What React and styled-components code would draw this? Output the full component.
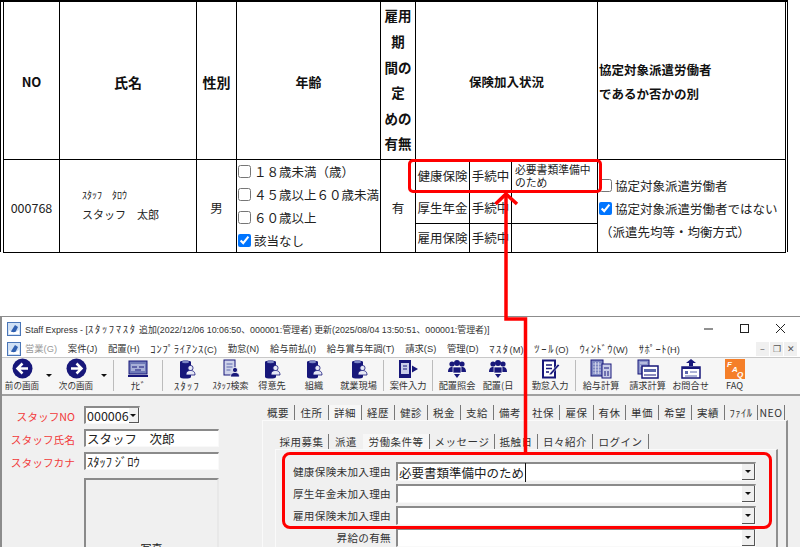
import React from 'react';
import styled, { createGlobalStyle } from 'styled-components';

const NAVY = '#17177a';
const SLATE = '#5c68ad';
const JP = `"Noto Sans CJK JP", "Noto Sans", sans-serif`;
const UI = `"Liberation Sans", "Noto Sans CJK JP", sans-serif`;

const GlobalStyle = createGlobalStyle`
  html, body {
    margin: 0;
    padding: 0;
    background: #fff;
    overflow: hidden;
  }
  * { box-sizing: border-box; }
`;

const Page = styled.div`
  position: relative;
  width: 800px;
  height: 547px;
  overflow: hidden;
  font-family: ${JP};
  color: #222;
`;

/* ---- contract table ---- */

const TableFrame = styled.div`
  width: 788px;
  height: 252px;
  border-top: 2px solid #000;
  border-left: 1px solid #000;
  border-right: 1px solid #000;
  padding: 0 2px;
`;

const Table = styled.table`
  table-layout: fixed;
  border-collapse: collapse;
  width: 782px;
  height: 250px;
  font-size: 12.5px;
`;

const Head = styled.th`
  border: 1px solid #000;
  border-top: 0;
  padding: ${p => p.$flat ? 0 : 4}px 0 0 ${p => p.$left ? 1 : 0}px;
  height: 157px;
  font-size: ${p => p.$size || 12.5}px;
  font-weight: 700;
  color: #111;
  text-align: ${p => p.$left ? 'left' : 'center'};
  line-height: ${p => p.$lh || 24}px;
`;

const Cell = styled.td`
  border: 1px solid #000;
  padding: ${p => p.$pad || 0};
  text-align: ${p => p.$center ? 'center' : 'left'};
  vertical-align: middle;
  white-space: nowrap;
`;

const NameKana = styled.div`
  font-size: 10px;
  line-height: 14px;
  padding-left: 22px;
  margin-bottom: 5px;
`;

const NameText = styled.div`
  font-size: 11px;
  line-height: 14px;
  padding-left: 22px;
  margin-bottom: 2px;
`;

const CheckLine = styled.label`
  display: flex;
  align-items: center;
  height: ${p => p.$h}px;
  padding-left: ${p => p.$indent}px;
`;

const Check = styled.input.attrs({ type: 'checkbox', readOnly: true })`
  margin: 0 3px 0 0;
  width: 13px;
  height: 13px;
`;

const InsuranceGrid = styled.div`
  display: grid;
  grid-template-columns: 54px 42px 1fr;
  grid-template-rows: 33px 31px 1fr;
  height: 92px;
`;

const InsuranceCell = styled.div`
  display: flex;
  align-items: center;
  justify-content: center;
  border-right: ${p => p.$last ? 0 : '1px solid #000'};
  border-bottom: ${p => p.$bottom ? '1px solid #000' : 0};
  font-size: ${p => p.$small ? 10.8 : 12.5}px;
  line-height: 13px;
  white-space: ${p => p.$small ? 'normal' : 'nowrap'};
  ${p => p.$small && 'padding: 0 3px 0 3px; justify-content: flex-start;'}
`;

const ReasonNote = styled.div`
  padding-left: 1px;
  height: 23px;
  line-height: 23px;
`;

/* ---- red annotations ---- */

const RedBox = styled.div`
  position: absolute;
  left: ${p => p.$x}px;
  top: ${p => p.$y}px;
  width: ${p => p.$w}px;
  height: ${p => p.$h}px;
  border: 3px solid #f00;
  border-radius: ${p => p.$r}px;
`;

const ArrowLayer = styled.svg`
  position: absolute;
  left: 0;
  top: 0;
  pointer-events: none;
`;

/* ---- application window ---- */

const Window = styled.div`
  margin-top: 64px;
  height: 231px;
  border-top: 1px solid #8c8c8c;
  border-left: 2px solid #8c8c8c;
  background: #f0f0f0;
  overflow: hidden;
`;

const TitleBar = styled.div`
  display: flex;
  align-items: center;
  height: 23px;
  background: #fff;
  padding-left: 5px;
  font-family: ${UI};
  font-size: 8.9px;
  color: #333;
  white-space: nowrap;
`;

const TitleText = styled.span`
  margin-left: 4px;
`;

const Kana = styled.span`
  font-size: ${p => p.$size || 10.5}px;
  letter-spacing: ${p => p.$sp ?? 1.7}px;
`;

const WinControls = styled.div`
  display: flex;
  align-items: center;
  gap: 25px;
  margin-left: auto;
  padding-right: 14px;
`;

const MenuBar = styled.div`
  display: flex;
  align-items: center;
  height: 17px;
  background: #fff;
  padding-left: 5px;
  border-bottom: 1px solid #c8c8c8;
  box-sizing: content-box;
  white-space: nowrap;
`;

const MenuList = styled.div`
  display: flex;
  gap: 10.8px;
  margin-left: 4px;
  font-family: ${UI};
`;

const MenuItem = styled.span`
  font-size: 9.3px;
  color: ${p => p.$off ? '#9a9a9a' : '#333'};
`;

const MdiButtons = styled.div`
  display: flex;
  gap: 1px;
  margin-left: auto;
  margin-right: 3px;
`;

const MdiButton = styled.span`
  display: flex;
  align-items: center;
  justify-content: center;
  width: 13px;
  height: 14px;
  background: #f0f0f0;
  font-size: 9px;
  color: #555;
`;

const Toolbar = styled.div`
  display: flex;
  height: 38px;
  padding-left: 1px;
  background: #f6f6f6;
  border-bottom: 2px solid #a0a0a0;
`;

const ToolItem = styled.div`
  display: flex;
  flex-direction: column;
  align-items: center;
  flex: 0 0 ${p => p.$w}px;
`;

const ToolIconBox = styled.div`
  height: 21px;
  display: flex;
  align-items: center;
`;

const ToolLabel = styled.span`
  font-size: ${p => p.$size || 9.2}px;
  line-height: 13px;
  white-space: nowrap;
  color: #333;
`;

const Caret = styled.div`
  flex: 0 0 ${p => p.$w}px;
  display: flex;
  justify-content: center;
  padding-top: 16px;
  &::before {
    content: '';
    border-left: 3px solid transparent;
    border-right: 3px solid transparent;
    border-top: 3px solid #111;
    height: 0;
  }
`;

const ToolSep = styled.div`
  flex: 0 0 1px;
  margin: 2px 0 3px;
  background: #bcbcbc;
`;

const Body = styled.div`
  display: flex;
  height: 135px;
`;

const LeftPane = styled.div`
  flex: 0 0 260px;
  padding-top: 10px;
  display: flex;
  flex-direction: column;
`;

const LeftRow = styled.div`
  display: flex;
  align-items: center;
  height: 18px;
  margin-bottom: ${p => p.$mb}px;
`;

const RedLabel = styled.span`
  width: 73px;
  margin-right: 9px;
  padding-top: 2px;
  text-align: right;
  font-size: 10.7px;
  color: #f23a3a;
  white-space: nowrap;
`;

const Field = styled.div`
  display: flex;
  align-items: center;
  width: ${p => p.$w}px;
  height: 100%;
  background: #fff;
  border-top: 2px solid #8a8a8a;
  border-left: 2px solid #8a8a8a;
  border-right: 1px solid #f9f9f9;
  border-bottom: 1px solid #f9f9f9;
  padding-left: 1px;
  font-size: 12.5px;
  white-space: nowrap;
`;

const DropButton = styled.span`
  display: flex;
  align-items: center;
  justify-content: center;
  width: 13px;
  height: 100%;
  margin-left: auto;
  background: #f0f0f0;
  border-right: 1px solid #555;
  border-bottom: 1px solid #555;
  &::before {
    content: '';
    border-left: 3px solid transparent;
    border-right: 3px solid transparent;
    border-top: 3px solid #111;
  }
`;

const PhotoBox = styled.div`
  margin-left: 82px;
  width: 135px;
  height: 90px;
  padding-top: 60px;
  background: #f0f0f0;
  border-top: 2px solid #8a8a8a;
  border-left: 2px solid #8a8a8a;
  border-right: 2px solid #e8e8e8;
  text-align: center;
  font-size: 11px;
`;

const RightPane = styled.div`
  flex: 1;
  padding-top: 9px;
`;

const TabRow = styled.div`
  display: flex;
  height: ${p => p.$h}px;
`;

const Tab = styled.span`
  flex: 0 0 ${p => p.$w}px;
  display: flex;
  align-items: center;
  justify-content: center;
  height: 15px;
  font-size: 10.5px;
  letter-spacing: 0.5px;
  white-space: nowrap;
  color: #333;
  background: ${p => p.$active ? '#f7f7f7' : 'transparent'};
  border-right: ${p => p.$plain ? 0 : '1px solid #777'};
`;

const OuterPanel = styled.div`
  width: 526px;
  height: 130px;
  border-top: 1px solid #fafafa;
  border-left: 1px solid #fafafa;
  border-right: 2px solid #8f8f8f;
  padding: 13px 0 0 12px;
`;

const InnerPanel = styled.div`
  width: 503px;
  height: 100px;
  border-top: 1px solid #fafafa;
  border-left: 1px solid #fafafa;
  border-right: 2px solid #8f8f8f;
  padding-top: 12px;
  display: flex;
  flex-direction: column;
  gap: 3px;
`;

const ReasonRow = styled.div`
  display: flex;
  align-items: center;
  height: 19px;
`;

const ReasonLabel = styled.span`
  width: 115px;
  margin-right: 5px;
  text-align: right;
  font-size: 10.6px;
  letter-spacing: 0.3px;
  white-space: nowrap;
  color: #333;
`;

const Caretted = styled.span`
  border-right: 1px solid #111;
  padding-right: 1px;
`;

/* ---- toolbar drawings ---- */

const Svg = ({ w = 20, h = 20, children }) => (
  <svg width={w} height={h} viewBox={`0 0 ${w} ${h}`}>{children}</svg>
);

const NavIcon = ({ back }) => (
  <Svg w={21} h={21}>
    <circle cx="10.500" cy="10.500" r="10" fill={NAVY} />
    <path
      d={back ? 'M16 10.500H6M10.500 5.500 5.500 10.500l5 5' : 'M5 10.500h10M10.500 5.500l5 5-5 5'}
      fill="none"
      stroke="#fff"
      strokeWidth="2.500"
    />
  </Svg>
);

const MonitorIcon = () => (
  <Svg w={22} h={20}>
    <rect x="2" y="2" width="18" height="13" fill="#6f7ab8" stroke={NAVY} />
    <rect x="4" y="5" width="14" height="7" fill="#a8b0d8" />
    <path d="M5 8h5M12 8h5M8 11h6" stroke={NAVY} />
    <rect x="1" y="16" width="20" height="2" fill={NAVY} />
  </Svg>
);

const Person = ({ x, y, fill = NAVY, line = '#fff' }) => (
  <>
    <circle cx={x} cy={y} r="2.600" fill={fill} stroke={line} strokeWidth="0.8" />
    <path d={`M${x - 4.5} ${y + 7}c0-3.500 2-4.500 4.500-4.500s4.500 1 4.500 4.500z`} fill={fill} stroke={line} strokeWidth="0.8" />
  </>
);

const FileIcon = () => (
  <Svg w={20} h={20}>
    <path d="M3 3c0-2 11-2 11 0v15c0 2-11 2-11 0z" fill={NAVY} />
    <ellipse cx="8.500" cy="3" rx="3.500" ry="1.200" fill="#7c86c4" />
    <Person x={13.5} y={9} fill="#e6e8f6" line={NAVY} />
  </Svg>
);

const DocPersonIcon = () => (
  <Svg w={20} h={20}>
    <rect x="3" y="1" width="11" height="15" fill="#cfd3ea" stroke={NAVY} />
    <path d="M5.500 5h6M5.500 8h6M5.500 11h4" stroke={SLATE} />
    <Person x={14} y={11} />
  </Svg>
);

const EntryIcon = () => (
  <Svg w={22} h={20}>
    <rect x="2" y="1" width="12" height="18" fill={NAVY} />
    <rect x="4" y="4" width="8" height="11" fill="#c9cde8" />
    <path d="M6 7h4M6 10h4" stroke={NAVY} />
    <path d="M15 6.500 21 10l-6 3.500z" fill={NAVY} />
  </Svg>
);

const GroupIcon = () => (
  <Svg w={20} h={20}>
    <circle cx="5" cy="5" r="2.600" fill={NAVY} />
    <circle cx="15" cy="5" r="2.600" fill={NAVY} />
    <circle cx="10" cy="4" r="3" fill={NAVY} />
    <path d="M1 13c0-4 2-5 4-5h10c2 0 4 1 4 5z" fill={NAVY} />
    <path d="M6 8h8v6H6z" fill={NAVY} stroke="#fff" strokeWidth="0.7" />
    <path d="M7 15h6l-3 4z" fill={NAVY} />
  </Svg>
);

const EditIcon = () => (
  <Svg w={20} h={20}>
    <rect x="3" y="1.500" width="12" height="17" fill="#fff" stroke={NAVY} strokeWidth="2" />
    <path d="M6 6h6M6 9.500h6M6 13h3" stroke={NAVY} strokeWidth="1.500" />
    <path d="M10 14l8-9 1.500 1.500-8 9-2.500.5z" fill={NAVY} stroke="#fff" strokeWidth="0.5" />
  </Svg>
);

const CalcIcon = () => (
  <Svg w={22} h={20}>
    <rect x="1" y="1" width="12" height="16" fill="#7d87c2" stroke={NAVY} />
    <path d="M3 5h8M3 8h8M3 11h8M3 14h8M5.500 3v12M8.500 3v12" stroke="#d6d9ee" strokeWidth="0.8" />
    <rect x="12" y="5" width="9" height="14" fill="#c9cde8" stroke={NAVY} />
    <path d="M14 9h5M15 12v5M18 12v5" stroke={NAVY} />
  </Svg>
);

const BillIcon = () => (
  <Svg w={22} h={20}>
    <rect x="1" y="1" width="11" height="14" fill="#8d96cb" stroke={NAVY} />
    <path d="M3 4h7M3 7h7" stroke="#e0e2f2" />
    <rect x="5" y="7" width="16" height="12" fill="#fff" stroke={NAVY} strokeWidth="1.500" />
    <rect x="7" y="10" width="12" height="3" fill={SLATE} />
    <path d="M7 16h12" stroke={NAVY} />
  </Svg>
);

const MailIcon = () => (
  <Svg w={22} h={20}>
    <path d="M11 0l5 4h-3v3H9V4H6z" fill={NAVY} />
    <rect x="2" y="8" width="18" height="11" fill="#fff" stroke={NAVY} strokeWidth="1.500" />
    <rect x="2" y="8" width="18" height="2" fill={NAVY} />
    <rect x="5" y="12" width="3" height="3" fill={SLATE} />
    <path d="M10 13h7M5 17h12" stroke={SLATE} />
  </Svg>
);

const FaqIcon = () => (
  <Svg w={20} h={20}>
    <rect width="20" height="20" fill="#f57f29" />
    <text x="2" y="8" fontSize="8" fontWeight="700" fontStyle="italic" fill="#fff" fontFamily="Liberation Sans">F</text>
    <text x="7" y="13" fontSize="8" fontWeight="700" fontStyle="italic" fill="#fff" fontFamily="Liberation Sans">A</text>
    <text x="12" y="18" fontSize="8" fontWeight="700" fontStyle="italic" fill="#fff" fontFamily="Liberation Sans">Q</text>
  </Svg>
);

const AppIcon = () => (
  <Svg w={14} h={14}>
    <rect x="0.500" y="0.500" width="13" height="13" fill="#cfe0f5" stroke="#4a76b8" />
    <path d="M3 11 8 3l3 2-3 6z" fill="#2f5fb0" />
    <path d="M2 8c3 3 6 3 10 0v4H2z" fill="#fff" />
  </Svg>
);

const MinIcon = () => <Svg w={11} h={11}><path d="M1 6h9" stroke="#222" /></Svg>;
const MaxIcon = () => <Svg w={11} h={11}><rect x="1.500" y="1.500" width="8" height="8" fill="none" stroke="#222" /></Svg>;
const CloseIcon = () => <Svg w={11} h={11}><path d="M1 1l9 9M10 1l-9 9" stroke="#222" /></Svg>;

/* ---- data ---- */

const menus = [
  { text: '案件(J)' },
  { text: '配置(H)' },
  { kana: 'ｺﾝﾌﾟﾗｲｱﾝｽ', sp: 0.8, text: '(C)' },
  { text: '勤怠(N)' },
  { text: '給与前払(I)' },
  { text: '給与賞与年調(T)' },
  { text: '請求(S)' },
  { text: '管理(D)' },
  { kana: 'ﾏｽﾀ', sp: 1.500, text: '(M)' },
  { kana: 'ﾂｰﾙ', text: '(O)' },
  { kana: 'ｳｨﾝﾄﾞｳ', sp: 0.4, text: '(W)' },
  { kana: 'ｻﾎﾟｰﾄ', sp: 0.5, text: '(H)' },
];

const tools = [
  { w: 38, label: '前の画面', size: 8.6, icon: <NavIcon back /> },
  { caret: 16 },
  { w: 38, label: '次の画面', size: 8.6, icon: <NavIcon /> },
  { caret: 18 },
  { sep: true },
  { w: 48, kana: 'ﾅﾋﾞ', icon: <MonitorIcon /> },
  { sep: true },
  { w: 48, kana: 'ｽﾀｯﾌ', icon: <FileIcon /> },
  { w: 39, label: 'ｽﾀｯﾌ検索', size: 9, icon: <DocPersonIcon /> },
  { w: 44, label: '得意先', icon: <FileIcon /> },
  { w: 40, label: '組織', icon: <FileIcon /> },
  { w: 49, label: '就業現場', icon: <FileIcon /> },
  { sep: true },
  { w: 48, label: '案件入力', icon: <EntryIcon /> },
  { sep: true },
  { w: 48, label: '配置照会', icon: <GroupIcon /> },
  { w: 34, label: '配置(日', icon: <GroupIcon /> },
  { w: 10 },
  { w: 50, label: '勤怠入力', icon: <EditIcon /> },
  { sep: true },
  { w: 50, label: '給与計算', icon: <CalcIcon /> },
  { w: 43, label: '請求計算', icon: <BillIcon /> },
  { w: 43, label: 'お問合せ', icon: <MailIcon /> },
  { w: 45, label: 'FAQ', icon: <FaqIcon /> },
];

const mainTabs = [
  ['概要', 33], ['住所', 34], ['詳細', 33], ['経歴', 33], ['健診', 33], ['税金', 33], ['支給', 33], ['備考', 33],
  ['社保', 33], ['雇保', 34], ['有休', 32], ['単価', 33], ['希望', 33], ['実績', 33], ['ﾌｧｲﾙ', 33], ['NEO', 27],
];

const subTabs = [
  ['採用募集', 54], ['派遣', 34], ['労働条件等', 67], ['メッセージ', 65], ['抵触日', 43], ['日々紹介', 55], ['ログイン', 56],
];

const reasons = ['健康保険未加入理由', '厚生年金未加入理由', '雇用保険未加入理由', '昇給の有無'];

const ages = [
  ['１８歳未満（歳）', false],
  ['４５歳以上６０歳未満', false],
  ['６０歳以上', false],
  ['該当なし', true],
];

const insurance = [
  ['健康保険', '手続中', '必要書類準備中のため'],
  ['厚生年金', '手続中', ''],
  ['雇用保険', '手続中', ''],
];

const App = () => (
  <Page>
    <GlobalStyle />

    <TableFrame>
      <Table>
        <colgroup>
          <col width="56" /><col width="137" /><col width="40" /><col width="144" />
          <col width="35" /><col width="182" /><col width="188" />
        </colgroup>
        <tbody>
          <tr>
            <Head $size={13}>NO</Head>
            <Head $size={14}>氏名</Head>
            <Head $size={14}>性別</Head>
            <Head $size={13}>年齢</Head>
            <Head $size={13.500} $lh={25.600} $flat>雇用<br />期<br />間の<br />定<br />めの<br />有無</Head>
            <Head>保険加入状況</Head>
            <Head $left>協定対象派遣労働者<br />であるか否かの別</Head>
          </tr>
          <tr>
            <Cell $center $pad="4px 0 0">000768</Cell>
            <Cell>
              <NameKana>ｽﾀｯﾌ　ﾀﾛｳ</NameKana>
              <NameText>スタッフ　太郎</NameText>
            </Cell>
            <Cell $center $pad="4px 0 0">男</Cell>
            <Cell>
              {ages.map(([text, on]) => (
                <CheckLine key={text} $h={23.200} $indent={1}>
                  <Check defaultChecked={on} />{text}
                </CheckLine>
              ))}
            </Cell>
            <Cell $center $pad="4px 0 0">有</Cell>
            <Cell>
              <InsuranceGrid>
                {insurance.map(([kind, state, reason], i) => (
                  <React.Fragment key={kind}>
                    <InsuranceCell $bottom={i < 2}>{kind}</InsuranceCell>
                    <InsuranceCell $bottom={i < 2}>{state}</InsuranceCell>
                    <InsuranceCell $bottom={i < 2} $last $small>{reason}</InsuranceCell>
                  </React.Fragment>
                ))}
              </InsuranceGrid>
            </Cell>
            <Cell $pad="6px 0 0 1px">
              <CheckLine $h={23} $indent={0}><Check />協定対象派遣労働者</CheckLine>
              <CheckLine $h={23} $indent={0}><Check defaultChecked />協定対象派遣労働者ではない</CheckLine>
              <ReasonNote>（派遣先均等・均衡方式）</ReasonNote>
            </Cell>
          </tr>
        </tbody>
      </Table>
    </TableFrame>

    <Window>
      <TitleBar>
        <AppIcon />
        <TitleText>Staff Express - [<Kana>ｽﾀｯﾌﾏｽﾀ</Kana> 追加(2022/12/06 10:06:50、000001:管理者) 更新(2025/08/04 13:50:51、000001:管理者)]</TitleText>
        <WinControls><MinIcon /><MaxIcon /><CloseIcon /></WinControls>
      </TitleBar>
      <MenuBar>
        <AppIcon />
        <MenuList>
          <MenuItem $off>営業(G)</MenuItem>
          {menus.map(m => (
            <MenuItem key={m.text}>
              {m.kana && <Kana $sp={m.sp}>{m.kana}</Kana>}{m.text}
            </MenuItem>
          ))}
        </MenuList>
        <MdiButtons>
          <MdiButton>–</MdiButton>
          <MdiButton>❐</MdiButton>
          <MdiButton>✕</MdiButton>
        </MdiButtons>
      </MenuBar>
      <Toolbar>
        {tools.map((t, i) => {
          if (t.sep) return <ToolSep key={i} />;
          if (t.caret) return <Caret key={i} $w={t.caret} />;
          return (
            <ToolItem key={i} $w={t.w}>
              <ToolIconBox>{t.icon}</ToolIconBox>
              <ToolLabel $size={t.size}>
                {t.kana ? <Kana $sp={t.kana === 'ﾅﾋﾞ' ? -0.5 : 1.2}>{t.kana}</Kana> : t.label}
              </ToolLabel>
            </ToolItem>
          );
        })}
      </Toolbar>
      <Body>
        <LeftPane>
          <LeftRow $mb={5}>
            <RedLabel>スタッフNO</RedLabel>
            <Field $w={56}>000006<DropButton /></Field>
          </LeftRow>
          <LeftRow $mb={5}>
            <RedLabel>スタッフ氏名</RedLabel>
            <Field $w={135}>スタッフ　次郎</Field>
          </LeftRow>
          <LeftRow $mb={8}>
            <RedLabel>スタッフカナ</RedLabel>
            <Field $w={135}>ｽﾀｯﾌ ｼﾞﾛｳ</Field>
          </LeftRow>
          <PhotoBox>写真</PhotoBox>
        </LeftPane>
        <RightPane>
          <TabRow $h={15}>
            {mainTabs.map(([label, w]) => (
              <Tab key={label} $w={w} $active={label === '詳細'}>{label}</Tab>
            ))}
          </TabRow>
          <OuterPanel>
            <TabRow $h={15}>
              {subTabs.map(([label, w]) => (
                <Tab key={label} $w={w} $active={label === '労働条件等'} $plain={label === '派遣'}>{label}</Tab>
              ))}
            </TabRow>
            <InnerPanel>
              {reasons.map((label, i) => (
                <ReasonRow key={label}>
                  <ReasonLabel>{label}</ReasonLabel>
                  <Field $w={360}>
                    {i === 0 && <Caretted>必要書類準備中のため</Caretted>}
                    <DropButton />
                  </Field>
                </ReasonRow>
              ))}
            </InnerPanel>
          </OuterPanel>
        </RightPane>
      </Body>
    </Window>

    <RedBox $x={408} $y={159} $w={194} $h={34} $r={5} />
    <RedBox $x={282} $y={452} $w={490} $h={77} $r={8} />
    <ArrowLayer width="800" height="547">
      <path d="M506 195V319H525.500V453" fill="none" stroke="#f00" strokeWidth="3.500" />
      <path d="M495.500 204 506 194 517 204" fill="none" stroke="#f00" strokeWidth="3.500" />
    </ArrowLayer>
  </Page>
);

export default App;
